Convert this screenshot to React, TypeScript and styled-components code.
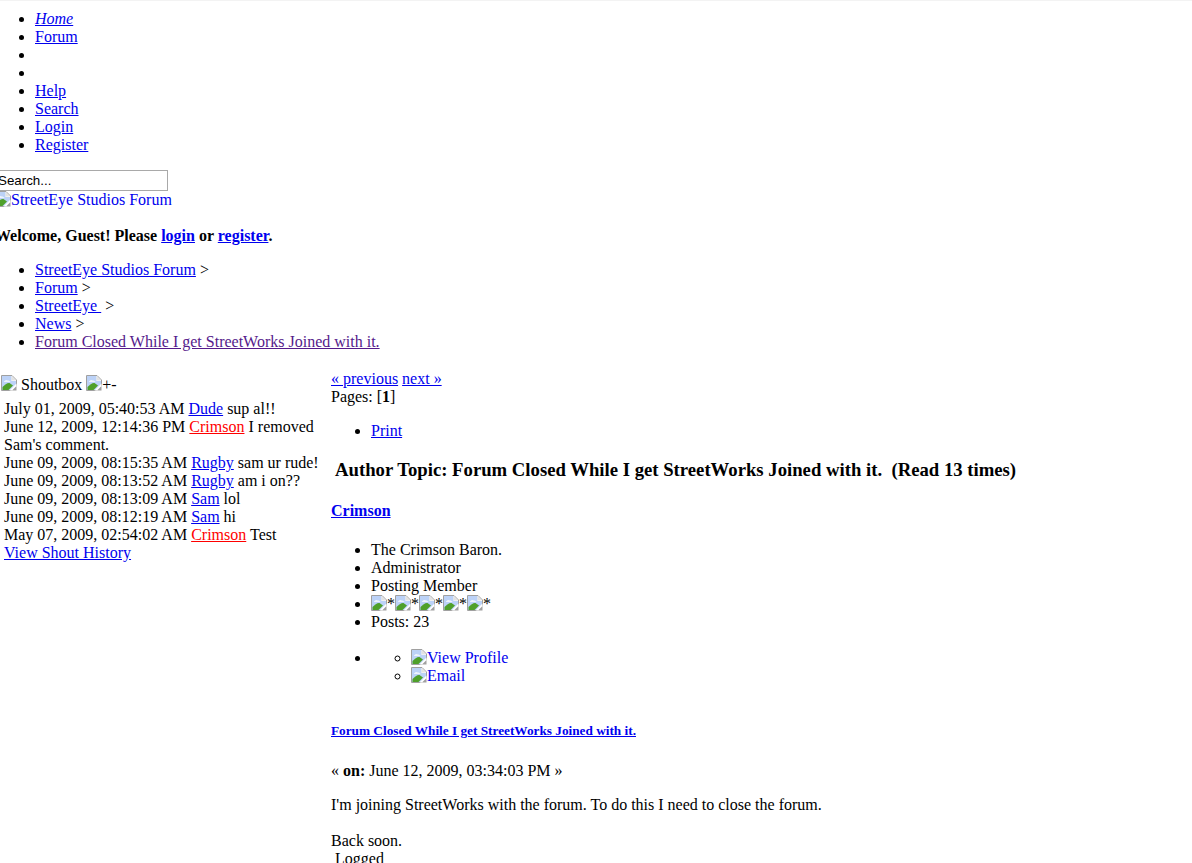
import React from "react";
import styled, { createGlobalStyle } from "styled-components";

const GlobalStyle = createGlobalStyle`
	html, body {
		margin: 0;
		padding: 0;
		height: 863px;
		overflow: hidden;
		background: #fff;
		color: #000;
		font-family: "Liberation Serif", "Times New Roman", serif;
		font-size: 16px;
		line-height: 18px;
	}
	a {
		color: #0000ee;
	}
`;

const BrokenImage = () => (
	<BrokenIcon viewBox="0 0 16 16" aria-hidden="true">
		<path d="M.5.500h10.500l4.500 4.500v5.500l-5 5H.5z" fill="#fff" stroke="#a0a0a0" />
		<path d="M1 1h9.500v5H15v3.500L9.500 15H1z" fill="#bcd2f7" />
		<path d="M10.500 1l4.500 4.500h-4.500z" fill="#e2e2e2" />
		<path d="M3 6.500c1-1.800 3-2 4-1 1 0 2 .5 2.500 1.500H3z" fill="#eef3fc" />
		<path d="M1.500 15v-3C4 9.500 6.500 7.500 8.500 8l3.500 2.500-4.500 4.500z" fill="#4fa02a" />
		<path d="M8.500 15.500l7-7v7z" fill="#fff" />
		<path d="M11 15.500l4.500-4.500v4.500z" fill="#a0a0a0" />
	</BrokenIcon>
);

const shouts = [
	{ date: "July 01, 2009, 05:40:53 AM", name: "Dude", text: "sup al!!" },
	{ date: "June 12, 2009, 12:14:36 PM", name: "Crimson", text: "I removed Sam's comment.", admin: true },
	{ date: "June 09, 2009, 08:15:35 AM", name: "Rugby", text: "sam ur rude!" },
	{ date: "June 09, 2009, 08:13:52 AM", name: "Rugby", text: "am i on??" },
	{ date: "June 09, 2009, 08:13:09 AM", name: "Sam", text: "lol" },
	{ date: "June 09, 2009, 08:12:19 AM", name: "Sam", text: "hi" },
	{ date: "May 07, 2009, 02:54:02 AM", name: "Crimson", text: "Test", admin: true },
];

const App = () => {
	return (
		<Page>
			<GlobalStyle />
			<TopLine />
			<Shifted>
				<MainMenu>
					<li><a href="#"><em>Home</em></a></li>
					<li><a href="#">Forum</a></li>
					<li>&nbsp;</li>
					<li>&nbsp;</li>
					<li><a href="#">Help</a></li>
					<li><a href="#">Search</a></li>
					<li><a href="#">Login</a></li>
					<li><a href="#">Register</a></li>
				</MainMenu>
				<SearchInput defaultValue="Search..." />
				<div>
					<PlainLink href="#"><BrokenImage />StreetEye Studios Forum</PlainLink>
				</div>
				<Welcome>
					Welcome, Guest! Please <a href="#">login</a> or <a href="#">register</a>.
				</Welcome>
				<Breadcrumbs>
					<li><a href="#">StreetEye Studios Forum</a> &gt;</li>
					<li><a href="#">Forum</a> &gt;</li>
					<li><a href="#">StreetEye&nbsp;</a> &gt;</li>
					<li><a href="#">News</a> &gt;</li>
					<li><Visited href="#">Forum Closed While I get StreetWorks Joined with it.</Visited></li>
				</Breadcrumbs>
			</Shifted>
			<Columns>
				<Sidebar>
					<ShoutHeader>
						<BrokenImage /> Shoutbox <BrokenImage />+-
					</ShoutHeader>
					<ShoutList>
						{shouts.map((shout) => (
							<div key={shout.date}>
								{shout.date}{" "}
								<ShoutName href="#" $admin={shout.admin}>{shout.name}</ShoutName>{" "}
								{shout.text}
							</div>
						))}
						<a href="#">View Shout History</a>
					</ShoutList>
				</Sidebar>
				<Content>
					<div><a href="#">« previous</a> <a href="#">next »</a></div>
					<div>Pages: [<b>1</b>]</div>
					<PrintList>
						<li><a href="#">Print</a></li>
					</PrintList>
					<TopicTitle>Author Topic: Forum Closed While I get StreetWorks Joined with it. &nbsp;(Read 13 times)</TopicTitle>
					<PosterName><a href="#">Crimson</a></PosterName>
					<PosterInfo>
						<li>The Crimson Baron.</li>
						<li>Administrator</li>
						<li>Posting Member</li>
						<li>
							{[1, 2, 3, 4, 5].map((star) => (
								<React.Fragment key={star}><BrokenImage />*</React.Fragment>
							))}
						</li>
						<li>Posts: 23</li>
					</PosterInfo>
					<ProfileList>
						<li>
							<ProfileLinks>
								<li><PlainLink href="#"><BrokenImage />View Profile</PlainLink></li>
								<li><PlainLink href="#"><BrokenImage />Email</PlainLink></li>
							</ProfileLinks>
						</li>
					</ProfileList>
					<PostTitle><a href="#">Forum Closed While I get StreetWorks Joined with it.</a></PostTitle>
					<PostDate>« <b>on:</b> June 12, 2009, 03:34:03 PM »</PostDate>
					<PostBody>
						I'm joining StreetWorks with the forum. To do this I need to close the forum.
						<br /><br />
						Back soon.
						<br />
						&nbsp;Logged
					</PostBody>
				</Content>
			</Columns>
		</Page>
	);
};

const Page = styled.div`
	width: 1192px;
	height: 863px;
	overflow: hidden;
`;

const TopLine = styled.div`
	height: 1px;
	background: #f3f3f3;
`;

const Shifted = styled.div`
	margin-left: -5px;
	padding-top: 9px;
`;

const BrokenIcon = styled.svg`
	width: 16px;
	height: 16px;
	vertical-align: -2px;
`;

const PlainLink = styled.a`
	text-decoration: none;
`;

const MainMenu = styled.ul`
	margin: 0 0 16px;
	padding-left: 40px;
	list-style: disc;
`;

const SearchInput = styled.input`
	display: block;
	box-sizing: border-box;
	width: 173px;
	height: 21px;
	margin: 0;
	padding: 1px 2px;
	border: 1px solid #a9a9a9;
	font-family: "Liberation Sans", Arial, sans-serif;
	font-size: 13.33px;
	color: #000;
	outline: none;
`;

const Welcome = styled.p`
	margin: 18px 0 16px;
	font-weight: bold;
`;

const Breadcrumbs = styled.ul`
	margin: 16px 0;
	padding-left: 40px;
	list-style: disc;
`;

const Visited = styled.a`
	color: #551a8b;
`;

const Columns = styled.div`
	display: flex;
	align-items: flex-start;
	margin-top: 19px;
	padding-left: 1px;
`;

const Sidebar = styled.div`
	flex: 0 0 330px;
	box-sizing: border-box;
	padding-right: 8px;
	padding-top: 5px;
`;

const ShoutHeader = styled.div`
	height: 18px;
	${BrokenIcon} {
		vertical-align: -1px;
	}
`;

const ShoutList = styled.div`
	margin-top: 7px;
	padding-left: 3px;
`;

const ShoutName = styled.a<{ $admin?: boolean }>`
	color: ${(p) => (p.$admin ? "#ff0000" : "#0000ee")};
`;

const Content = styled.div`
	flex: 1;
	min-width: 0;
`;

const PrintList = styled.ul`
	margin: 16px 0;
	padding-left: 40px;
`;

const TopicTitle = styled.h3`
	margin: 19px 0 0 4px;
	font-size: 18.72px;
	line-height: 21px;
	font-weight: bold;
`;

const PosterName = styled.h4`
	margin: 22px 0 0;
	font-size: 16px;
	line-height: 18px;
	font-weight: bold;
`;

const PosterInfo = styled.ul`
	margin: 21px 0 0;
	padding-left: 40px;
`;

const ProfileList = styled.ul`
	margin: 18px 0 0;
	padding-left: 40px;
`;

const ProfileLinks = styled.ul`
	margin: 0;
	padding-left: 40px;
	list-style: circle;
`;

const PostTitle = styled.h5`
	margin: 38px 0 0;
	font-size: 13.28px;
	line-height: 15px;
	font-weight: bold;
`;

const PostDate = styled.div`
	margin-top: 24px;
`;

const PostBody = styled.div`
	margin-top: 16px;
`;

export default App;
